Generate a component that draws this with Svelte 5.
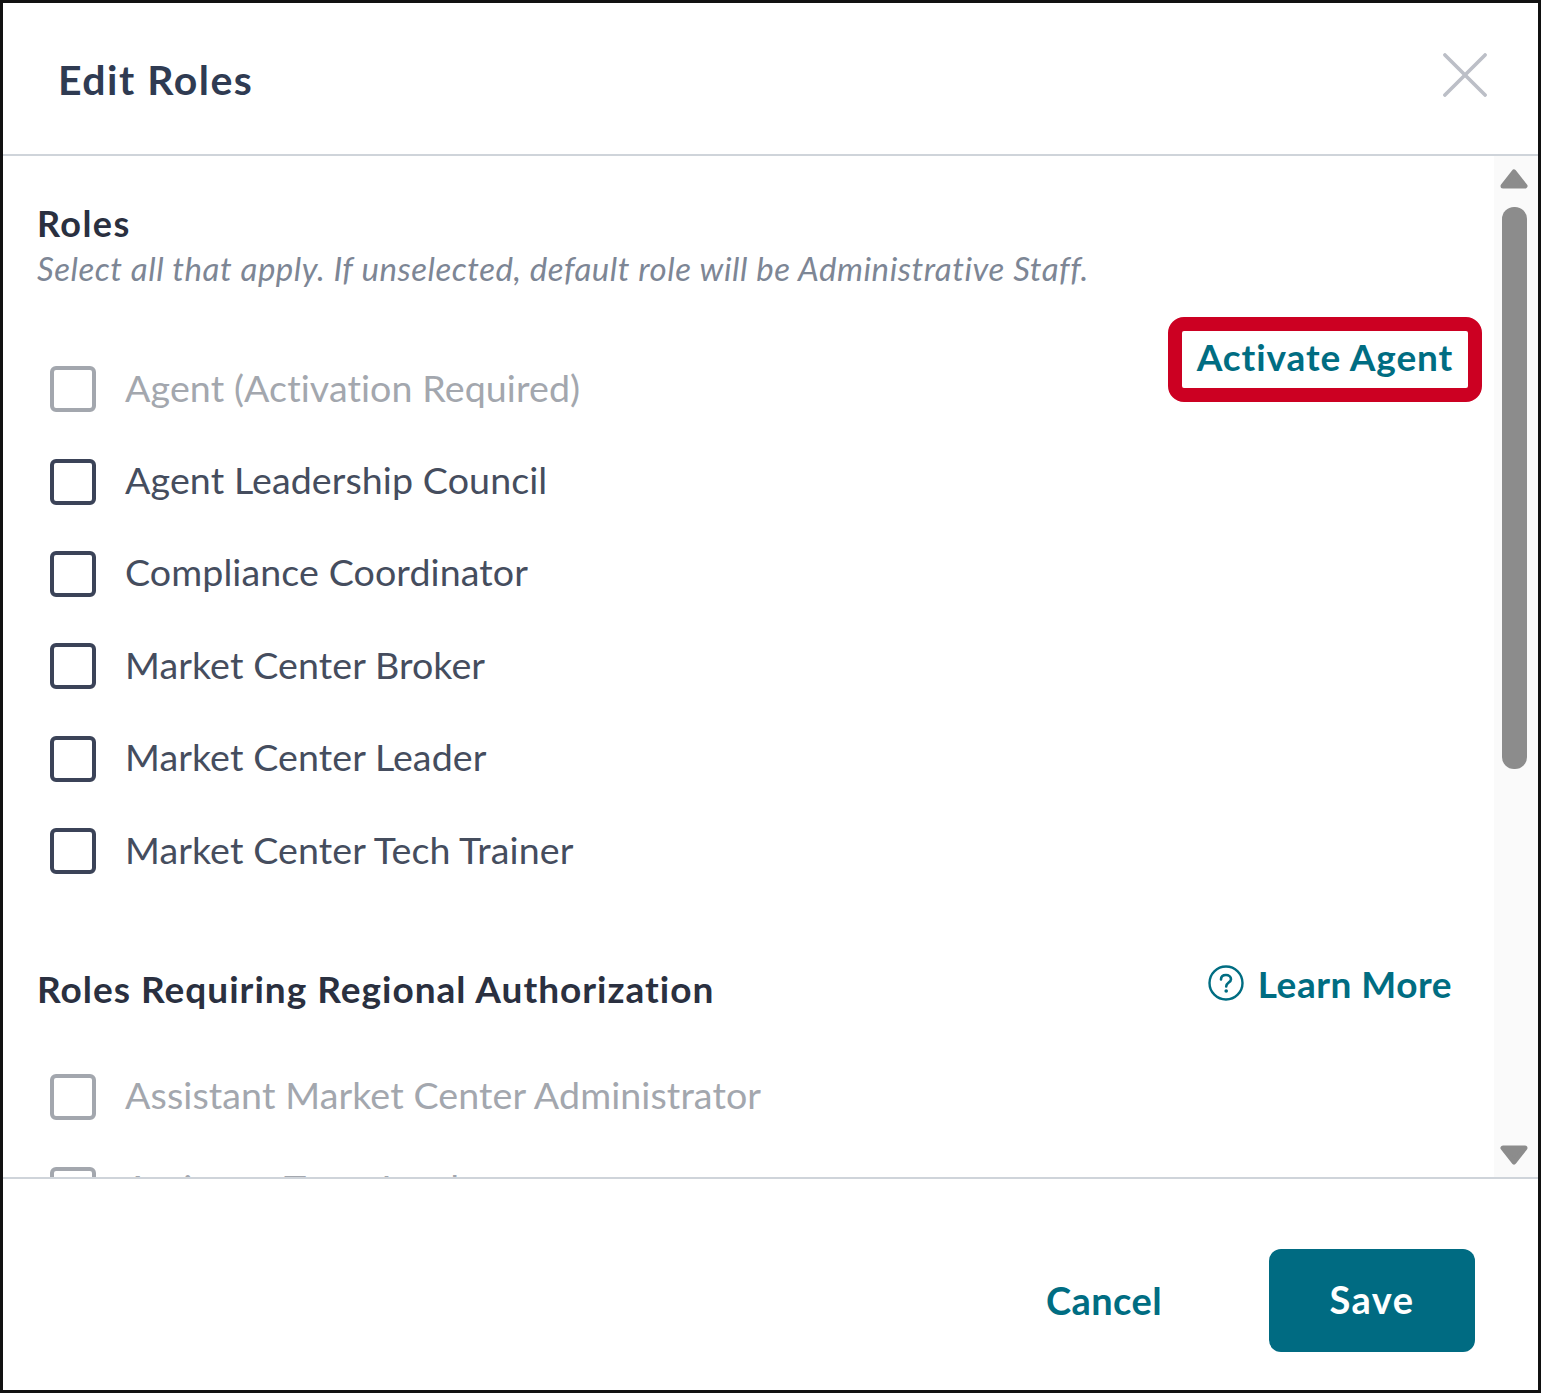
<script>
  let roles = [
    { name: "Agent (Activation Required)", disabled: true },
    { name: "Agent Leadership Council" },
    { name: "Compliance Coordinator" },
    { name: "Market Center Broker" },
    { name: "Market Center Leader" },
    { name: "Market Center Tech Trainer" }
  ];
  let regional = [
    { name: "Assistant Market Center Administrator", disabled: true },
    { name: "Assistant Team Leader", disabled: true }
  ];
</script>

<div class="frame">
  <header class="head">
    <h1>Edit Roles</h1>
    <button class="close" aria-label="Close">
      <svg viewBox="0 0 46 46" width="44" height="44">
        <path d="M2 2 L44 44 M44 2 L2 44" fill="none" stroke="#bcbfc7" stroke-width="3.8" stroke-linecap="round" />
      </svg>
    </button>
  </header>

  <div class="middle">
    <div class="content">
      <div class="title-row">
        <h2>Roles</h2>
        <p class="hint">Select all that apply. If unselected, default role will be Administrative Staff.</p>
      </div>
      <div class="role-list">
        <div class="activate">Activate Agent</div>
        {#each roles as role}
          <div class="role" class:disabled={role.disabled}>
            <span class="box"></span>
            <span class="label">{role.name}</span>
          </div>
        {/each}
      </div>
      <div class="section-row">
        <h2>Roles Requiring Regional Authorization</h2>
        <div class="learn">
          <svg viewBox="0 0 36 36" width="36" height="36">
            <circle cx="18" cy="18" r="16.5" fill="none" stroke="#006d82" stroke-width="2.4" />
            <path d="M13 14.5 C13 11.5 15.3 10 18 10 C20.8 10 23 11.7 23 14.2 C23 17.6 18.2 17.6 18.2 21.4" fill="none" stroke="#006d82" stroke-width="2.6" stroke-linecap="round" />
            <circle cx="18.2" cy="26" r="1.8" fill="#006d82" />
          </svg>
          <span>Learn More</span>
        </div>
      </div>
      <div class="role-list second">
        {#each regional as role}
          <div class="role" class:disabled={role.disabled}>
            <span class="box"></span>
            <span class="label">{role.name}</span>
          </div>
        {/each}
      </div>
    </div>
    <div class="scroller">
      <svg class="arrow up" viewBox="0 0 28 20" width="28" height="20">
        <path d="M14 3 L25 17 L3 17 Z" fill="#8c8c8c" stroke="#8c8c8c" stroke-width="5" stroke-linejoin="round" />
      </svg>
      <div class="track"><div class="thumb"></div></div>
      <svg class="arrow down" viewBox="0 0 28 20" width="28" height="20">
        <path d="M3 3 L25 3 L14 17 Z" fill="#8c8c8c" stroke="#8c8c8c" stroke-width="5" stroke-linejoin="round" />
      </svg>
    </div>
  </div>

  <footer class="foot">
    <span class="cancel">Cancel</span>
    <button class="save">Save</button>
  </footer>
</div>

<style>
  :global(body) {
    margin: 0;
    background: #fff;
  }
  .frame {
    box-sizing: border-box;
    width: 1541px;
    height: 1393px;
    border: 3px solid #111;
    display: flex;
    flex-direction: column;
    background: #fff;
    font-family: Lato, "Open Sans", sans-serif;
  }
  .head {
    box-sizing: border-box;
    height: 153px;
    flex: none;
    display: flex;
    justify-content: space-between;
    padding: 47px 51px 0 55px;
    border-bottom: 2px solid #cfd4da;
  }
  h1 {
    margin: 0;
    font-size: 41px;
    line-height: 60px;
    font-weight: 700;
    letter-spacing: 1.5px;
    color: #2f3b52;
  }
  .close {
    height: 44px;
    margin-top: 3px;
    padding: 0;
    border: 0;
    background: none;
  }
  .middle {
    height: 1021px;
    flex: none;
    display: flex;
    overflow: hidden;
  }
  .content {
    flex: 1;
    padding: 45px 42px 0 34px;
    min-width: 0;
  }
  h2 {
    margin: 0;
    font-size: 36px;
    line-height: 44px;
    font-weight: 700;
    letter-spacing: 1.4px;
    color: #2a3040;
  }
  .hint {
    margin: 0;
    font-size: 33px;
    line-height: 47px;
    font-style: italic;
    letter-spacing: 0.55px;
    color: #7d8695;
  }
  .role-list {
    position: relative;
    margin-top: 51px;
  }
  .activate {
    position: absolute;
    right: -30px;
    top: -26px;
    box-sizing: border-box;
    width: 314px;
    height: 85px;
    border: 14px solid #cc0022;
    border-radius: 16px;
    display: flex;
    align-items: center;
    justify-content: center;
    padding-bottom: 7px;
    font-size: 37px;
    font-weight: 700;
    letter-spacing: 0.9px;
    color: #006d82;
    background: #fff;
  }
  .role {
    height: 92.4px;
    display: flex;
    align-items: center;
    gap: 29px;
    padding-left: 13px;
    font-size: 37.6px;
    letter-spacing: 0.1px;
    color: #454d5e;
  }
  .role.disabled {
    color: #a3a7ae;
  }
  .label {
    padding-bottom: 4px;
  }
  .box {
    box-sizing: border-box;
    width: 46px;
    height: 46px;
    flex: none;
    border: 4px solid #3b4358;
    border-radius: 6px;
  }
  .role.disabled .box {
    border-color: #a3a7ae;
  }
  .section-row {
    margin-top: 70px;
    display: flex;
    justify-content: space-between;
    align-items: center;
  }
  .section-row h2 {
    font-size: 37px;
    letter-spacing: 1px;
  }
  .learn {
    display: flex;
    align-items: center;
    gap: 14px;
    margin-top: -12px;
    font-size: 37px;
    font-weight: 700;
    letter-spacing: 0.5px;
    color: #006d82;
  }
  .second {
    margin-top: 39px;
  }
  .second .role {
    height: 93px;
  }
  .scroller {
    width: 44px;
    flex: none;
    background: #fafafa;
    display: flex;
    flex-direction: column;
    align-items: center;
    padding-right: 4px;
    box-sizing: border-box;
  }
  .arrow {
    flex: none;
    display: block;
  }
  .up {
    margin-top: 13px;
  }
  .down {
    margin-bottom: 12px;
  }
  .track {
    flex: 1;
    padding-top: 18px;
  }
  .thumb {
    width: 25px;
    height: 562px;
    border-radius: 12px;
    background: #8c8c8c;
  }
  .foot {
    flex: 1;
    display: flex;
    justify-content: flex-end;
    align-items: flex-start;
    gap: 107px;
    padding: 70px 63px 0 0;
    border-top: 2px solid #cfd4da;
  }
  .cancel {
    margin-top: 28px;
    font-size: 38px;
    font-weight: 700;
    letter-spacing: 0.4px;
    color: #006d82;
  }
  .save {
    width: 206px;
    height: 103px;
    border: 0;
    border-radius: 12px;
    padding-bottom: 4px;
    background: #006b82;
    color: #fff;
    font-family: inherit;
    font-size: 38px;
    font-weight: 700;
    letter-spacing: 1.5px;
  }
</style>
